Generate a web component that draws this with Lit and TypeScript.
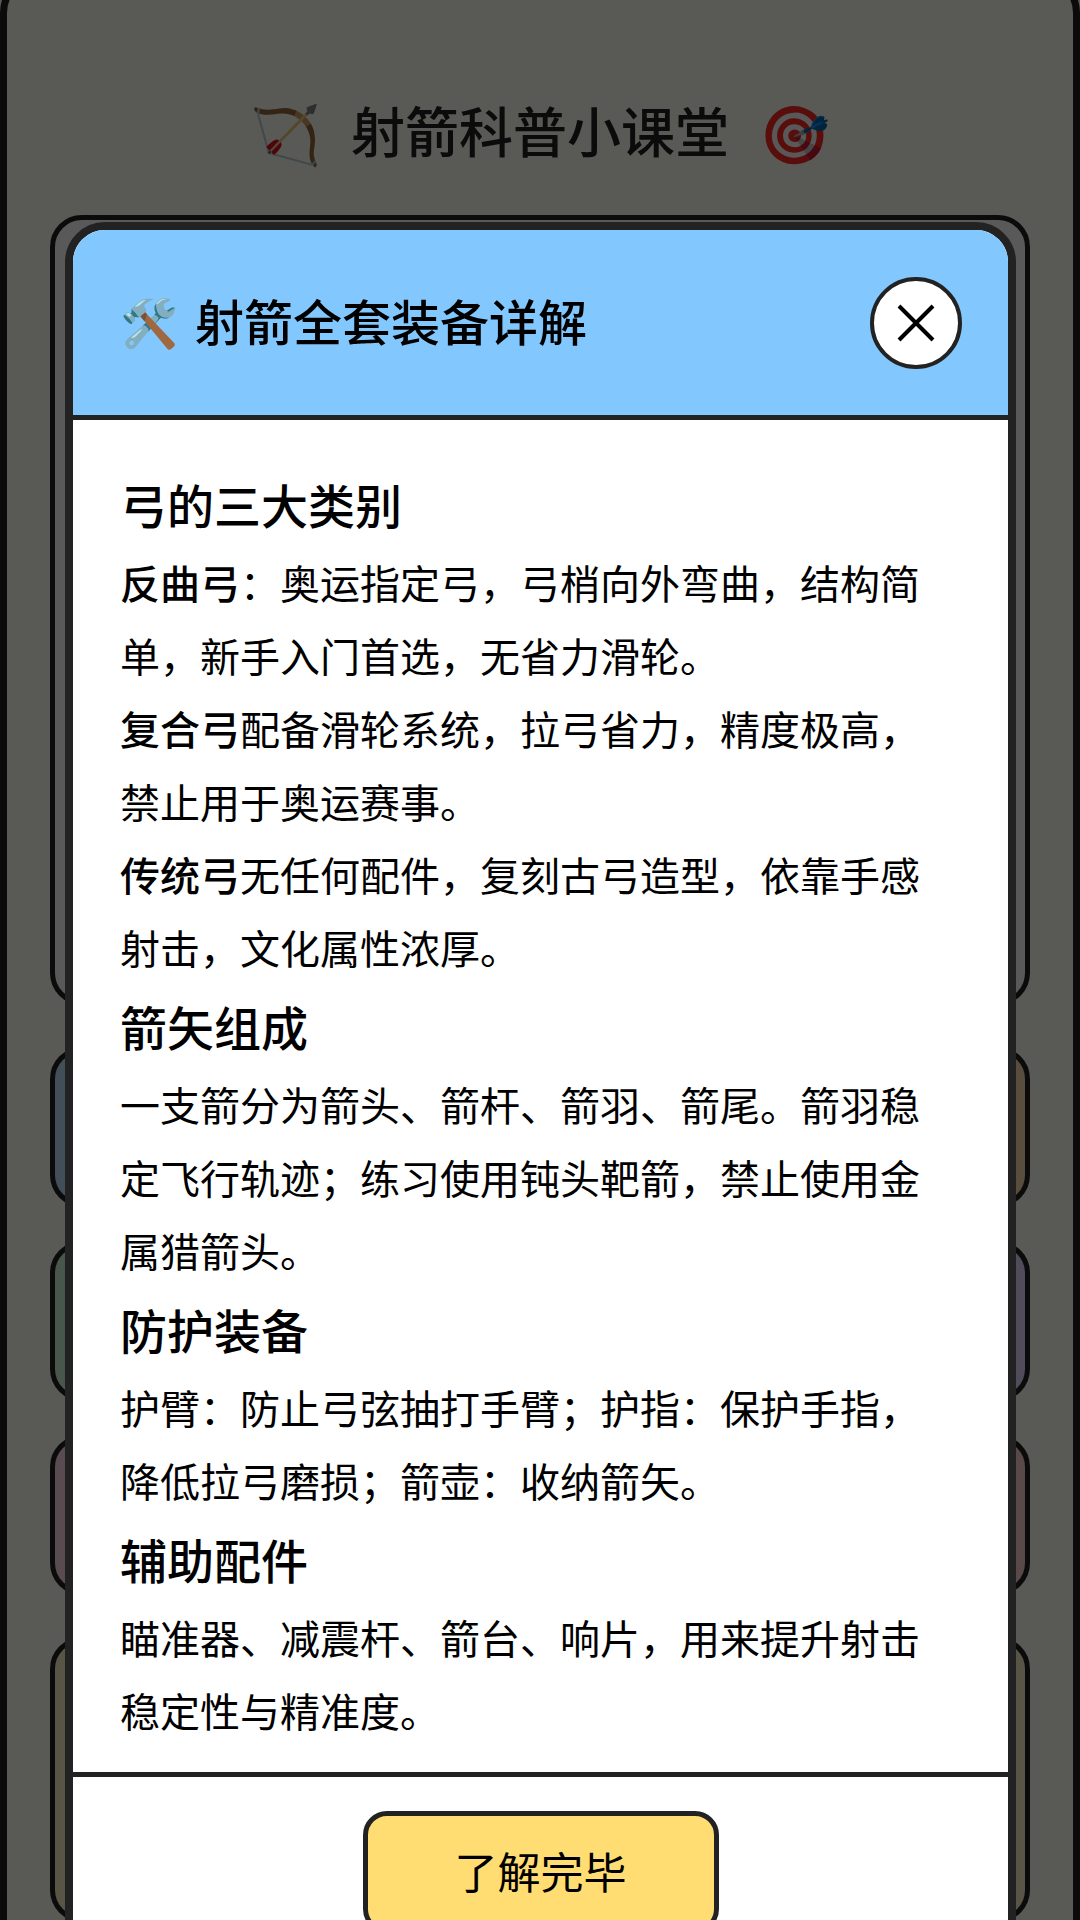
import { LitElement, html, css, svg } from "lit";
import { customElement } from "lit/decorators.js";

type Run = { text: string; strong?: boolean };
type Section = { title: string; paragraphs: Run[][] };

const SECTIONS: Section[] = [
  {
    title: "弓的三大类别",
    paragraphs: [
      [{ text: "反曲弓", strong: true }, { text: "：奥运指定弓，弓梢向外弯曲，结构简单，新手入门首选，无省力滑轮。" }],
      [{ text: "复合弓", strong: true }, { text: "配备滑轮系统，拉弓省力，精度极高，禁止用于奥运赛事。" }],
      [{ text: "传统弓", strong: true }, { text: "无任何配件，复刻古弓造型，依靠手感射击，文化属性浓厚。" }],
    ],
  },
  {
    title: "箭矢组成",
    paragraphs: [[{ text: "一支箭分为箭头、箭杆、箭羽、箭尾。箭羽稳定飞行轨迹；练习使用钝头靶箭，禁止使用金属猎箭头。" }]],
  },
  {
    title: "防护装备",
    paragraphs: [[{ text: "护臂：防止弓弦抽打手臂；护指：保护手指，降低拉弓磨损；箭壶：收纳箭矢。" }]],
  },
  {
    title: "辅助配件",
    paragraphs: [[{ text: "瞄准器、减震杆、箭台、响片，用来提升射击稳定性与精准度。" }]],
  },
];

const TILES = ["blue", "orange", "green", "purple", "pink", "red"];

const closeIcon = svg`<path d="M3 3 L37 37 M37 3 L3 37" fill="none" stroke="#000" stroke-width="4"/>`;

@customElement("app-root")
export class AppRoot extends LitElement {
  static styles = css`
    :host {
      display: block;
      min-height: 100vh;
      background: #fffef7;
      color: #222;
      font-family: "Noto Sans CJK SC", "Noto Sans", sans-serif;
    }
    * {
      box-sizing: border-box;
    }
    .viewport {
      height: 100vh;
      overflow: hidden;
    }
    .frame {
      margin-top: -27px;
      min-height: 110vh;
      padding: 110px 43px 0;
      border: 7px solid #222;
      border-radius: 40px;
      background: #fffef6;
    }
    .page-title {
      display: flex;
      justify-content: center;
      align-items: center;
      gap: 30px;
      height: 80px;
      margin: 0 0 45px;
      font-size: 54px;
      line-height: 80px;
      font-weight: 500;
    }
    .page-title .emoji {
      font-size: 57px;
    }
    .board,
    .tile,
    .notice {
      border: 5px solid #222;
      border-radius: 32px;
    }
    .board {
      height: 790px;
      margin-bottom: 42px;
      background: #fff;
    }
    .tiles {
      display: grid;
      grid-template-columns: 1fr 1fr;
      gap: 34px;
      margin-bottom: 42px;
    }
    .tile {
      height: 160px;
    }
    .blue { background: #bde3ff; }
    .orange { background: #ffdcb0; }
    .green { background: #d2f5d6; }
    .purple { background: #e4daff; }
    .pink { background: #ffd9e4; }
    .red { background: #ffd0d0; }
    .notice {
      height: 285px;
      background: #fff3c8;
    }
    .overlay {
      position: fixed;
      inset: 0;
      overflow: hidden;
      padding: 222px 64px 0 65px;
      background: rgba(0, 0, 0, 0.65);
    }
    .modal {
      overflow: hidden;
      border: 8px solid #222;
      border-radius: 40px;
      background: #fff;
      color: #000;
    }
    .modal-head {
      display: flex;
      justify-content: space-between;
      align-items: center;
      padding: 47px 46px 46px 47px;
      border-bottom: 5px solid #222;
      background: #82c8ff;
    }
    .modal-title {
      display: flex;
      align-items: center;
      gap: 16px;
      margin: 0;
      padding-bottom: 6px;
      font-size: 49px;
      line-height: 72px;
      font-weight: 500;
    }
    .modal-title .emoji {
      font-size: 47px;
    }
    .close {
      display: grid;
      place-items: center;
      width: 92px;
      height: 92px;
      padding: 0;
      border: 4px solid #222;
      border-radius: 50%;
      background: #fff;
    }
    .close svg {
      width: 40px;
      height: 40px;
    }
    .modal-body {
      padding: 42px 64px 25px 47px;
      font-size: 40px;
      line-height: 73px;
    }
    .modal-body h3 {
      margin: 0;
      font-size: 47px;
      line-height: 84px;
      font-weight: 500;
    }
    .modal-body p {
      margin: 0;
    }
    .modal-body strong {
      font-weight: 500;
    }
    .modal-foot {
      display: flex;
      justify-content: center;
      padding: 34px;
      border-top: 5px solid #222;
    }
    .done {
      padding: 22px 87px 26px;
      border: 5px solid #222;
      border-radius: 24px;
      background: #ffdd72;
      color: #000;
      font: inherit;
      font-size: 43px;
      line-height: 64px;
    }
  `;

  render() {
    return html`
      <div class="viewport">
        <main class="frame">
          <h1 class="page-title">
            <span class="emoji">🏹</span><span>射箭科普小课堂</span><span class="emoji">🎯</span>
          </h1>
          <div class="board"></div>
          <div class="tiles">${TILES.map((c) => html`<div class="tile ${c}"></div>`)}</div>
          <div class="notice"></div>
        </main>
      </div>
      <div class="overlay">
        <section class="modal" role="dialog" aria-modal="true" aria-labelledby="modal-title">
          <header class="modal-head">
            <h2 class="modal-title" id="modal-title">
              <span class="emoji">🛠️</span><span>射箭全套装备详解</span>
            </h2>
            <button class="close" type="button" aria-label="关闭">
              <svg viewBox="0 0 40 40" aria-hidden="true">${closeIcon}</svg>
            </button>
          </header>
          <div class="modal-body">
            ${SECTIONS.map(
              (s) => html`
                <h3>${s.title}</h3>
                ${s.paragraphs.map(
                  (p) => html`<p>${p.map((r) => (r.strong ? html`<strong>${r.text}</strong>` : r.text))}</p>`
                )}
              `
            )}
          </div>
          <footer class="modal-foot"><button class="done" type="button">了解完毕</button></footer>
        </section>
      </div>
    `;
  }
}
